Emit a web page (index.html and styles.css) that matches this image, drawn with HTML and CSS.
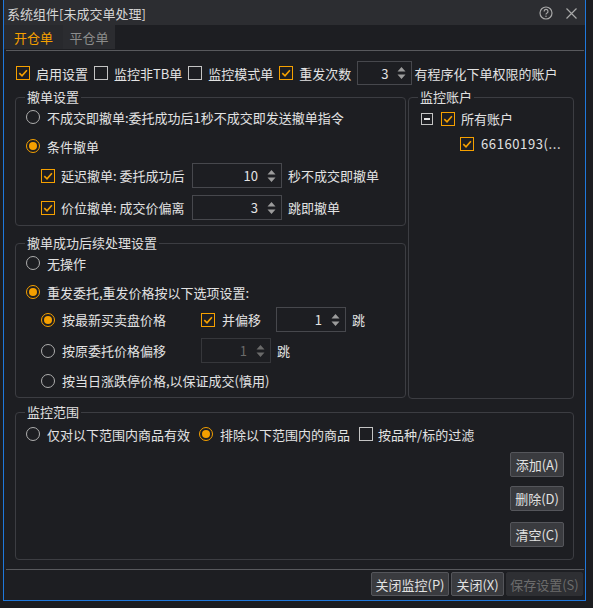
FILE: index.html
```html
<!DOCTYPE html>
<html lang="zh-CN">
<head>
<meta charset="utf-8">
<title>系统组件[未成交单处理]</title>
<link rel="stylesheet" href="styles.css">
</head>
<body>
<div class="win">
  <div class="titlebar">
    <span class="title">系统组件[未成交单处理]</span>
    <span class="tb-icons">
      <svg class="ic-help" width="14" height="14" viewBox="0 0 14 14"><circle cx="7" cy="7" r="6" fill="none" stroke="#a8a8a8" stroke-width="1.2"/><path d="M5.1 5.4a1.95 1.95 0 1 1 2.7 1.8c-.6.3-.8.7-.8 1.4" fill="none" stroke="#a8a8a8" stroke-width="1.2"/><circle cx="7" cy="10.3" r=".75" fill="#a8a8a8"/></svg>
      <svg class="ic-close" width="11" height="11" viewBox="0 0 11 11"><path d="M.5.5l10 10M10.5.5l-10 10" stroke="#a8a8a8" stroke-width="1.2"/></svg>
    </span>
  </div>
  <div class="tabs">
    <span class="tab active">开仓单</span>
    <span class="tab inactive">平仓单</span>
  </div>
  <div class="sep"></div>

  <div class="content">
    <div class="toprow">
      <label class="cb first"><span class="box on"><svg viewBox="0 0 12 12"><path d="M2.3 6.2L5 8.8l4.9-5.6"/></svg></span>启用设置</label>
      <label class="cb"><span class="box"></span>监控非TB单</label>
      <label class="cb"><span class="box"></span>监控模式单</label>
      <label class="cb"><span class="box on"><svg viewBox="0 0 12 12"><path d="M2.3 6.2L5 8.8l4.9-5.6"/></svg></span>重发次数</label>
      <span class="spin w55"><span class="val">3</span><svg class="arr" viewBox="0 0 9 14"><path d="M4.5 1L8.5 5.5H.5z M.5 8.5h8L4.5 13z"/></svg></span>
      <span class="txt ml2">有程序化下单权限的账户</span>
    </div>

    <div class="cols">
      <div class="leftcol">
        <div class="group g1">
          <div class="gt">撤单设置</div>
          <div class="row r-top"><span class="rd"></span>不成交即撤单:委托成功后1秒不成交即发送撤单指令</div>
          <div class="row mt5"><span class="rd on"></span>条件撤单</div>
          <div class="row sub mt5">
            <label class="cb lbl151"><span class="box on"><svg viewBox="0 0 12 12"><path d="M2.3 6.2L5 8.8l4.9-5.6"/></svg></span>延迟撤单: 委托成功后</label>
            <span class="spin w90"><span class="val">10</span><svg class="arr" viewBox="0 0 9 14"><path d="M4.5 1L8.5 5.5H.5z M.5 8.5h8L4.5 13z"/></svg></span>
            <span class="txt ml6">秒不成交即撤单</span>
          </div>
          <div class="row sub mt7">
            <label class="cb lbl151"><span class="box on"><svg viewBox="0 0 12 12"><path d="M2.3 6.2L5 8.8l4.9-5.6"/></svg></span>价位撤单: 成交价偏离</label>
            <span class="spin w90"><span class="val">3</span><svg class="arr" viewBox="0 0 9 14"><path d="M4.5 1L8.5 5.5H.5z M.5 8.5h8L4.5 13z"/></svg></span>
            <span class="txt ml6">跳即撤单</span>
          </div>
        </div>

        <div class="group g2">
          <div class="gt">撤单成功后续处理设置</div>
          <div class="row r-top"><span class="rd"></span>无操作</div>
          <div class="row mt5"><span class="rd on"></span>重发委托,重发价格按以下选项设置:</div>
          <div class="row sub mt3">
            <span class="rdl lbl160"><span class="rd on"></span>按最新买卖盘价格</span>
            <label class="cb gap7"><span class="box on"><svg viewBox="0 0 12 12"><path d="M2.3 6.2L5 8.8l4.9-5.6"/></svg></span>并偏移</label>
            <span class="spin w70 ml15"><span class="val">1</span><svg class="arr" viewBox="0 0 9 14"><path d="M4.5 1L8.5 5.5H.5z M.5 8.5h8L4.5 13z"/></svg></span>
            <span class="txt ml6">跳</span>
          </div>
          <div class="row sub mt6">
            <span class="rdl lbl160"><span class="rd"></span>按原委托价格偏移</span>
            <span class="spin w70 dis"><span class="val">1</span><svg class="arr" viewBox="0 0 9 14"><path d="M4.5 1L8.5 5.5H.5z M.5 8.5h8L4.5 13z"/></svg></span>
            <span class="txt ml6">跳</span>
          </div>
          <div class="row sub mt5">
            <span class="rdl"><span class="rd"></span>按当日涨跌停价格,以保证成交(慎用)</span>
          </div>
        </div>
      </div>

      <div class="group acct">
        <div class="gt">监控账户</div>
        <div class="trow t1">
          <span class="exp"></span>
          <label class="cb"><span class="box on"><svg viewBox="0 0 12 12"><path d="M2.3 6.2L5 8.8l4.9-5.6"/></svg></span>所有账户</label>
        </div>
        <div class="trow t2">
          <label class="cb gap7"><span class="box on"><svg viewBox="0 0 12 12"><path d="M2.3 6.2L5 8.8l4.9-5.6"/></svg></span><span class="acctno">66160193(...</span></label>
        </div>
      </div>
    </div>

    <div class="group scope">
      <div class="gt">监控范围</div>
      <div class="row r-top">
        <span class="rdl"><span class="rd"></span>仅对以下范围内商品有效</span>
        <span class="rdl ml9"><span class="rd on"></span>排除以下范围内的商品</span>
        <label class="cb ml9 gap5"><span class="box"></span>按品种/标的过滤</label>
      </div>
      <div class="btncol">
        <button class="btn b-add">添加(A)</button>
        <button class="btn b-del">删除(D)</button>
        <button class="btn b-clr">清空(C)</button>
      </div>
    </div>
  </div>

  <div class="sep sep2"></div>
  <div class="footer">
    <button class="btn f1">关闭监控(P)</button>
    <button class="btn f2">关闭(X)</button>
    <button class="btn f3 disabled">保存设置(S)</button>
  </div>
</div>
</body>
</html>
```

FILE: styles.css
```css
* { box-sizing: border-box; margin: 0; padding: 0; }

html, body {
  width: 593px;
  height: 608px;
  overflow: hidden;
}

body {
  background: #1c1d20;
  font-family: "Noto Sans CJK SC", "Noto Sans", sans-serif;
  font-size: 13px;
  color: #e2e2e2;
}

.win {
  margin-left: 3px;
  width: 583px;
  height: 601px;
  border: 1px solid #1f78dc;
  border-top: none;
  background: #1d1e22;
  display: flex;
  flex-direction: column;
}

/* title bar */
.titlebar {
  height: 25px;
  flex: none;
  background: #2c2d31;
  display: flex;
  align-items: center;
  padding: 3px 8px 0 3px;
}
.title {
  color: #d6d6d6;
  line-height: 16px;
  white-space: nowrap;
}
.tb-icons {
  margin-left: auto;
  display: flex;
  align-items: center;
  gap: 13px;
}
.tb-icons svg { display: block; }
.ic-help { margin-top: -2px; }
.ic-close { margin-top: -2px; }

/* tabs */
.tabs {
  height: 25px;
  flex: none;
  display: flex;
  align-items: stretch;
}
.tab {
  display: flex;
  align-items: center;
  justify-content: center;
  height: 24px;
  background: #2b2c30;
  white-space: nowrap;
}
.tab.active { width: 59px; color: #f5a000; background: #28292d; }
.tab.inactive { width: 52px; color: #8c8c8c; }

.sep {
  height: 1px;
  flex: none;
  background: #58595d;
  margin: 0 1px 0 2px;
}

/* content */
.content {
  padding: 10px 11px 0;
  flex: none;
}

.toprow {
  height: 24px;
  display: flex;
  align-items: center;
  white-space: nowrap;
}
.toprow .cb { margin-right: 6px; }
.toprow .cb.first { margin-left: 1px; }

.cb {
  display: inline-flex;
  align-items: center;
  gap: 6px;
  white-space: nowrap;
}
.cb.gap7 { gap: 7px; }
.cb.gap5 { gap: 5px; }

.box {
  width: 14px;
  height: 14px;
  flex: none;
  border: 1px solid #c4c4c4;
  display: inline-flex;
  align-items: center;
  justify-content: center;
}
.box.on { border-color: #f5a000; }
.box svg { width: 12px; height: 12px; display: block; }
.box svg path { fill: none; stroke: #f5a000; stroke-width: 1.6; }

.rdl {
  display: inline-flex;
  align-items: center;
  gap: 7px;
  white-space: nowrap;
}
.rd {
  width: 14px;
  height: 14px;
  flex: none;
  border-radius: 50%;
  border: 1px solid #aeaeae;
  display: inline-flex;
  align-items: center;
  justify-content: center;
}
.rd.on { border-color: #f5a000; }
.rd.on::after {
  content: "";
  width: 8px;
  height: 8px;
  border-radius: 50%;
  background: #f5a000;
}

.txt { white-space: nowrap; }
.ml2 { margin-left: 2px; }
.ml6 { margin-left: 6px; }
.ml9 { margin-left: 9px; }
.ml15 { margin-left: 15px; }

/* spinbox */
.spin {
  display: inline-flex;
  align-items: center;
  height: 25px;
  border: 1px solid #47484d;
  background: #1d1e22;
  padding-right: 5px;
  flex: none;
}
.spin .val {
  flex: 1;
  text-align: right;
  padding-right: 9px;
  color: #e4e4e4;
}
.spin .arr { width: 9px; height: 14px; display: block; }
.spin .arr path { fill: #9c9c9c; }
.spin.dis { border-color: #36373b; }
.spin.dis .val { color: #6a6a6a; }
.spin.dis .arr path { fill: #6a6a6a; }
.w55 { width: 55px; height: 24px; }
.w90 { width: 90px; }
.w70 { width: 70px; }

/* columns */
.cols {
  margin-top: 12px;
  height: 302px;
  display: flex;
  gap: 2px;
}
.leftcol {
  width: 391px;
  display: flex;
  flex-direction: column;
}

.group {
  border: 1px solid #3c3d42;
  border-radius: 4px;
}
.gt {
  display: table;
  margin-top: -9px;
  margin-left: 9px;
  padding: 0 2px;
  height: 16px;
  line-height: 16px;
  background: #1d1e22;
  color: #e0e0e0;
  white-space: nowrap;
}

.row {
  display: flex;
  align-items: center;
  height: 24px;
  padding-left: 10px;
  white-space: nowrap;
}
.row > .rd { margin-right: 7px; }
.row.sub { padding-left: 25px; height: 25px; }
.mt3 { margin-top: 3px; }
.mt5 { margin-top: 5px; }
.mt6 { margin-top: 6px; }
.mt7 { margin-top: 7px; }

.lbl151 { width: 151px; }
.lbl160 { width: 160px; }

.g1 { height: 129px; }
.g2 { height: 155px; margin-top: 17px; }

.acct {
  width: 166px;
  height: 302px;
}
.trow {
  display: flex;
  align-items: center;
  height: 25px;
  white-space: nowrap;
}
.t1 { margin-top: 1px; padding-left: 12px; gap: 8px; }
.t2 { padding-left: 51px; }
.acctno { letter-spacing: 0.6px; }

.exp {
  width: 12px;
  height: 12px;
  border: 1px solid #c4c4c4;
  display: inline-flex;
  align-items: center;
  justify-content: center;
}
.exp::after {
  content: "";
  width: 6px;
  height: 2px;
  background: #e4e4e4;
}

/* scope */
.scope {
  margin-top: 13px;
  height: 148px;
}
.scope .row.r-top { margin-top: 2px; }
.btncol {
  display: flex;
  flex-direction: column;
  align-items: flex-end;
  padding-right: 9px;
}

.btn {
  font-family: "Noto Sans CJK SC", "Noto Sans", sans-serif;
  font-size: 13px;
  color: #e2e2e2;
  background: #3a3b3f;
  border: 1px solid #55565b;
  border-radius: 2px;
  height: 25px;
  display: flex;
  align-items: center;
  justify-content: center;
  white-space: nowrap;
  padding: 0;
}
.b-add, .b-del, .b-clr { width: 54px; }
.b-add { margin-top: 6px; }
.b-del { margin-top: 9px; }
.b-clr { margin-top: 11px; }

.sep2 { margin-top: 9px; }

.footer {
  margin-top: 2px;
  height: 24px;
  display: flex;
  justify-content: flex-end;
  gap: 2px;
  padding-right: 2px;
  flex: none;
}
.footer .btn { height: 24px; }
.f1 { width: 78px; }
.f2 { width: 53px; }
.f3 { width: 77px; }
.btn.disabled {
  background: #2e2f33;
  border-color: #2e2f33;
  color: #6c6c6c;
}
```
